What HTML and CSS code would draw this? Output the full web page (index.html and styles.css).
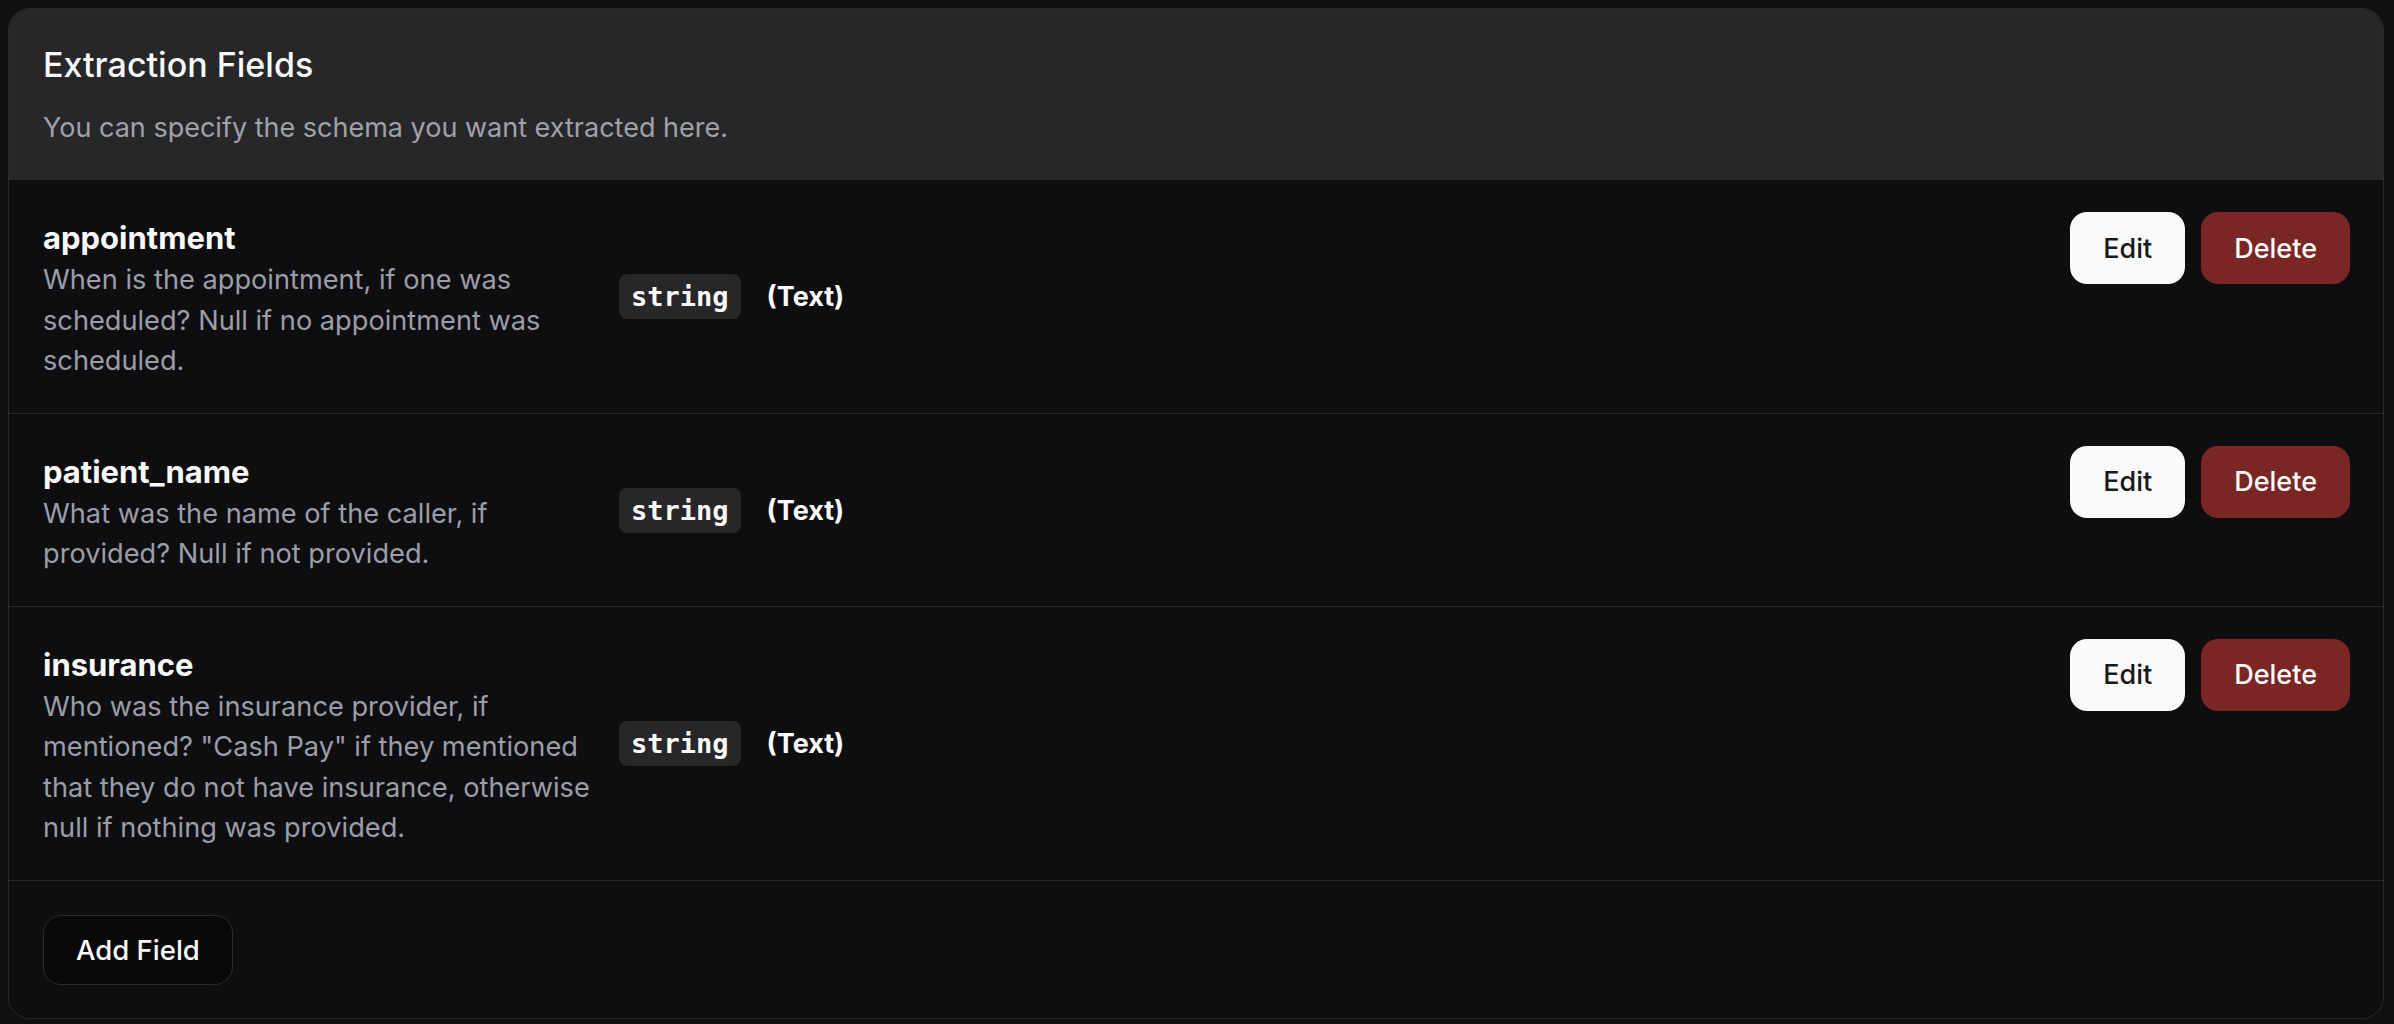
FILE: index.html
```html
<!DOCTYPE html>
<html lang="en">
<head>
<meta charset="utf-8">
<title>Extraction Fields</title>
<link rel="stylesheet" href="styles.css">
</head>
<body>
<section class="card">
  <header class="card-header">
    <h2 class="card-title">Extraction Fields</h2>
    <p class="card-desc">You can specify the schema you want extracted here.</p>
  </header>
  <div class="field-list">
    <div class="field-row">
      <div class="field-main">
        <div class="field-text">
          <div class="field-name">appointment</div>
          <div class="field-help">When is the appointment, if one was scheduled? Null if no appointment was scheduled.</div>
        </div>
        <code class="type-badge">string</code>
        <span class="type-label">(Text)</span>
      </div>
      <div class="field-actions">
        <button class="btn btn-light">Edit</button>
        <button class="btn btn-danger">Delete</button>
      </div>
    </div>
    <div class="field-row">
      <div class="field-main">
        <div class="field-text">
          <div class="field-name">patient_name</div>
          <div class="field-help">What was the name of the caller, if provided? Null if not provided.</div>
        </div>
        <code class="type-badge">string</code>
        <span class="type-label">(Text)</span>
      </div>
      <div class="field-actions">
        <button class="btn btn-light">Edit</button>
        <button class="btn btn-danger">Delete</button>
      </div>
    </div>
    <div class="field-row">
      <div class="field-main">
        <div class="field-text">
          <div class="field-name">insurance</div>
          <div class="field-help">Who was the insurance provider, if mentioned? "Cash Pay" if they mentioned that they do not have insurance, otherwise null if nothing was provided.</div>
        </div>
        <code class="type-badge">string</code>
        <span class="type-label">(Text)</span>
      </div>
      <div class="field-actions">
        <button class="btn btn-light">Edit</button>
        <button class="btn btn-danger">Delete</button>
      </div>
    </div>
  </div>
  <footer class="card-footer">
    <button class="btn btn-outline">Add Field</button>
  </footer>
</section>
</body>
</html>
```
FILE: styles.css
```css
* {
  box-sizing: border-box;
}

html, body {
  height: 100%;
}

body {
  margin: 0;
  padding: 8px 10px 6px 8px;
  background: #101012;
  font-family: "Inter", "Noto Sans", sans-serif;
  color: #fafafa;
}

.card {
  border: 1px solid #2a2a2e;
  border-radius: 22px;
  background: #0e0e10;
  overflow: hidden;
}

.card-header {
  background: #27272a;
  padding: 34px 34px 32px;
  display: flex;
  flex-direction: column;
  gap: 20px;
}

.card-title {
  margin: 0;
  font-size: 34px;
  line-height: 44px;
  font-weight: 500;
  color: #fafafa;
}

.card-desc {
  margin: 0;
  font-size: 27px;
  line-height: 41px;
  color: #a1a1aa;
}

.field-row {
  display: flex;
  justify-content: space-between;
  align-items: flex-start;
  padding: 32px 33px 31px 34px;
  border-bottom: 1px solid #27272a;
}

.field-main {
  display: flex;
  align-items: center;
}

.field-text {
  width: 560px;
  margin-right: 16px;
  padding-top: 4px;
}

.field-name {
  font-size: 31px;
  line-height: 44px;
  font-weight: 700;
  color: #fafafa;
}

.field-help {
  font-size: 27.2px;
  line-height: 40.5px;
  color: #9b9ea8;
}

.type-badge {
  font-family: "DejaVu Sans Mono", "Liberation Mono", monospace;
  font-weight: 700;
  font-size: 27px;
  line-height: 45px;
  height: 45px;
  padding: 0 12px;
  border-radius: 8px;
  background: #27272a;
  color: #fafafa;
}

.type-label {
  margin-left: 26px;
  font-size: 27px;
  font-weight: 700;
  color: #fafafa;
}

.field-actions {
  display: flex;
  gap: 16px;
}

.btn {
  font-family: "Inter", "Noto Sans", sans-serif;
  font-size: 27px;
  font-weight: 500;
  height: 72px;
  padding: 0 33px;
  border-radius: 17px;
  border: none;
  cursor: pointer;
}

.btn-light {
  background: #fafafa;
  color: #18181b;
}

.btn-danger {
  background: #7a2624;
  color: #fafafa;
}

.card-footer {
  padding: 34px 34px 33px;
}

.btn-outline {
  height: 70px;
  padding: 0 32px;
  font-size: 27.5px;
  background: #09090b;
  color: #fafafa;
  border: 1px solid #2c2c30;
  border-radius: 18px;
}
```
